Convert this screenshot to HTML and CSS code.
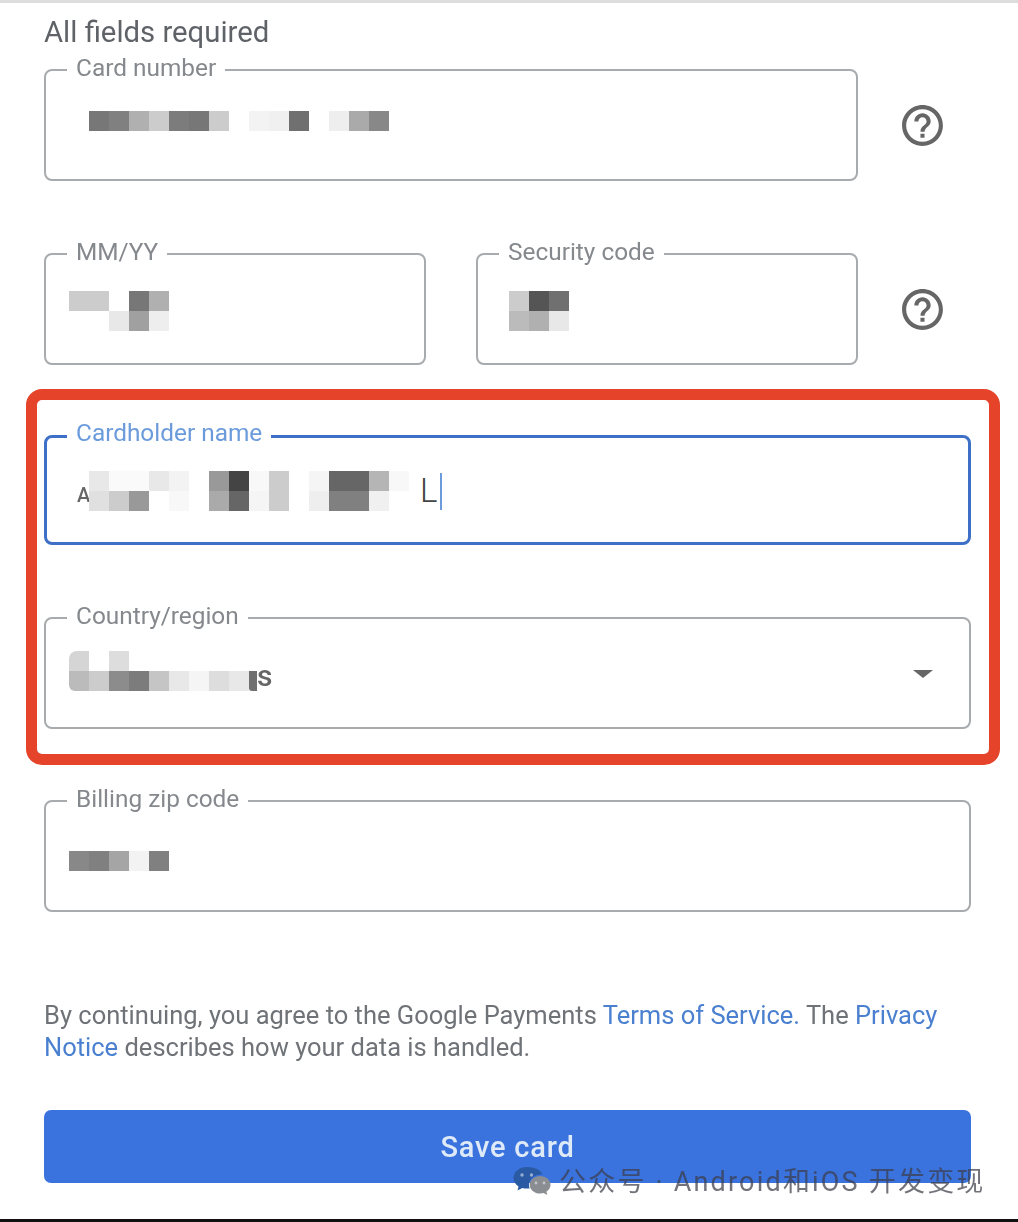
FILE: index.html
```html
<!DOCTYPE html>
<html lang="en">
<head>
    <meta charset="UTF-8">
    <title>Save card</title>
    <link rel="stylesheet" href="styles.css">
</head>
<body>
<div class="page">
    <h1 class="title">All fields required</h1>

    <div class="row">
        <div class="field">
            <span class="label">Card number</span>
            <div class="value pad-card">
                <div class="px"><i class="k77"></i><i class="k80"></i><i class="kb0"></i><i class="kcc"></i><i class="k7c"></i><i class="k77"></i><i class="kcc"></i><i></i><i class="kf3"></i><i class="kf0"></i><i class="k70"></i><i></i><i class="kee"></i><i class="kaa"></i><i class="k88"></i></div>
            </div>
        </div>
        <svg class="help" viewBox="0 0 24 24"><path d="M11 18h2v-2h-2v2zm1-16C6.48 2 2 6.48 2 12s4.48 10 10 10 10-4.48 10-10S17.52 2 12 2zm0 18c-4.41 0-8-3.59-8-8s3.59-8 8-8 8 3.59 8 8-3.59 8-8 8zm0-14c-2.21 0-4 1.79-4 4h2c0-1.1.9-2 2-2s2 .9 2 2c0 2-3 1.75-3 5h2c0-2.25 3-2.5 3-5 0-2.21-1.79-4-4-4z"/></svg>
    </div>

    <div class="row row-gap">
        <div class="pair">
            <div class="field">
                <span class="label">MM/YY</span>
                <div class="value pad-date">
                    <div>
                        <div class="px"><i class="kcc"></i><i class="kcc"></i><i></i><i class="k77"></i><i class="kb0"></i></div>
                        <div class="px"><i></i><i></i><i class="ke8"></i><i class="ka0"></i><i class="kee"></i></div>
                    </div>
                </div>
            </div>
            <div class="field">
                <span class="label">Security code</span>
                <div class="value pad-date pad-code">
                    <div>
                        <div class="px"><i class="kcc"></i><i class="k55"></i><i class="k70"></i></div>
                        <div class="px"><i class="kbb"></i><i class="kb0"></i><i class="ke8"></i></div>
                    </div>
                </div>
            </div>
        </div>
        <svg class="help" viewBox="0 0 24 24"><path d="M11 18h2v-2h-2v2zm1-16C6.48 2 2 6.48 2 12s4.48 10 10 10 10-4.48 10-10S17.52 2 12 2zm0 18c-4.41 0-8-3.59-8-8s3.59-8 8-8 8 3.59 8 8-3.59 8-8 8zm0-14c-2.21 0-4 1.79-4 4h2c0-1.1.9-2 2-2s2 .9 2 2c0 2-3 1.75-3 5h2c0-2.25 3-2.5 3-5 0-2.21-1.79-4-4-4z"/></svg>
    </div>

    <div class="mark">
        <div class="field focus">
            <span class="label">Cardholder name</span>
            <div class="value pad-name">
                <span class="first">A</span>
                <div class="name-px">
                    <div class="px"><i class="ke8"></i><i class="kfa"></i><i class="kfa"></i><i class="ke8"></i><i class="kf3"></i><i></i><i class="k99"></i><i class="k44"></i><i class="kf8"></i><i class="kcc"></i><i></i><i class="kf5"></i><i class="k66"></i><i class="k66"></i><i class="kb5"></i><i class="kf8"></i></div>
                    <div class="px"><i class="ke0"></i><i class="kcc"></i><i class="k99"></i><i></i><i class="kf8"></i><i></i><i class="kaa"></i><i class="k66"></i><i class="kf5"></i><i class="kcc"></i><i></i><i class="kee"></i><i class="k80"></i><i class="k80"></i><i class="kf0"></i></div>
                </div>
                <span class="typed">L</span>
                <span class="cursor"></span>
            </div>
        </div>
        <div class="field select">
            <span class="label">Country/region</span>
            <div class="value pad-country">
                <div>
                    <div class="px"><i class="kd5 round-top"></i><i></i><i class="kdd"></i></div>
                    <div class="px"><i class="kbb round-bottom"></i><i class="kcc"></i><i class="k8c"></i><i class="k7c"></i><i class="kc5"></i><i class="ke8"></i><i class="kf5"></i><i class="kdd"></i><i class="ke8"></i><i class="k70 cut"></i><span class="tail">s</span></div>
                </div>
            </div>
            <span class="arrow"></span>
        </div>
    </div>

    <div class="field">
        <span class="label">Billing zip code</span>
        <div class="value pad-zip">
            <div class="px"><i class="k88"></i><i class="k80"></i><i class="ka5"></i><i class="kf3"></i><i class="k80"></i></div>
        </div>
    </div>

    <p class="terms">By continuing, you agree to the Google Payments <a href="javascript:;">Terms of Service.</a> The <a href="javascript:;">Privacy Notice</a> describes how your data is handled.</p>

    <button class="save">Save card</button>
</div>

<div class="watermark">
    <svg class="wx" viewBox="0 0 38 30">
        <path class="wx-back" d="M14 1C6.5 1 .5 5.8.5 12c0 3.500 2 6.400 5 8.400L4.500 24.500l4.800-2.500c1.500.4 3 .6 4.700.6 1 0 1.800-.1 2.600-.2-.4-1.200-.6-2.300-.6-3.500 0-5.800 5.500-10.300 12.300-10.300h1C28.300 3.900 21.800 1 14 1z"/>
        <path class="wx-front" d="M37.500 18.800c0-5-4.700-8.800-10.400-8.800s-10.400 3.800-10.400 8.800 4.700 8.800 10.400 8.800c1.300 0 2.400-.2 3.600-.5l3.600 2-.9-3.300c2.600-1.700 4.100-4.100 4.100-7z"/>
        <circle class="wx-eye" cx="9" cy="9" r="1.700"/><circle class="wx-eye" cx="18.500" cy="9" r="1.700"/>
        <circle class="wx-eye" cx="23" cy="17" r="1.400"/><circle class="wx-eye" cx="31" cy="17" r="1.400"/>
    </svg>
    <span class="wx-text">公众号 · Android和iOS 开发变现</span>
</div>
</body>
</html>
```
FILE: styles.css
```css
*{
    box-sizing: border-box;
}
html,body{
    height: 100%;
}
body{
    margin: 0;
    background-color: #fff;
    font-family: Roboto, "Liberation Sans", "Noto Sans CJK SC", sans-serif;
    overflow: hidden;
    position: relative;
}
.page{
    height: 1222px;
    padding: 0 47px 0 44px;
    border-top: 3px solid #ddd;
    border-bottom: 3px solid #111;
}
.title{
    margin: 0;
    height: 66px;
    padding-top: 12px;
    font-size: 29.300px;
    line-height: 34px;
    font-weight: 400;
    color: #5f6368;
    filter: blur(.5px);
}
.row{
    display: flex;
    align-items: center;
    gap: 40px;
}
.row .field{
    width: 814px;
}
.row-gap{
    margin-top: 72px;
}
.pair{
    display: flex;
    gap: 50px;
    width: 814px;
}
.pair .field{
    flex: 1;
}
.help{
    width: 49px;
    height: 49px;
    fill: #666;
    flex: none;
    filter: blur(.6px);
}
.field{
    position: relative;
    height: 112px;
    border: 2px solid #a8abad;
    border-radius: 8px;
}
.label{
    position: absolute;
    top: -18px;
    left: 21px;
    padding: 0 9px;
    background-color: #fff;
    font-size: 24.400px;
    line-height: 30px;
    color: #85888c;
    white-space: nowrap;
    filter: blur(.4px);
}
.focus{
    height: 110px;
    border: 3px solid #3d70c6;
    border-radius: 8px;
}
.focus .label{
    top: -20px;
    left: 20px;
    color: #6b9bdb;
}
.select{
    margin-top: 72px;
}
.value{
    display: flex;
    align-items: flex-start;
    padding-left: 23px;
}
.pad-card{
    padding-top: 40px;
    padding-left: 43px;
}
.pad-date{
    padding-top: 36px;
}
.pad-code{
    padding-left: 31px;
}
.pad-name{
    padding-top: 33px;
    padding-left: 30px;
    align-items: center;
}
.pad-country{
    padding-top: 32px;
}
.pad-zip{
    padding-top: 49px;
}

/* pixelated values */
.px{
    display: flex;
    height: 20px;
}
.px i{
    display: block;
    width: 20px;
    height: 20px;
}
.k44{background-color: #444;}
.k55{background-color: #555;}
.k66{background-color: #666;}
.k70{background-color: #707070;}
.k77{background-color: #777;}
.k7c{background-color: #7c7c7c;}
.k80{background-color: #808080;}
.k88{background-color: #888;}
.k8c{background-color: #8c8c8c;}
.k99{background-color: #999;}
.ka0{background-color: #a0a0a0;}
.ka5{background-color: #a5a5a5;}
.kaa{background-color: #aaa;}
.kb0{background-color: #b0b0b0;}
.kb5{background-color: #b5b5b5;}
.kbb{background-color: #bbb;}
.kc5{background-color: #c5c5c5;}
.kcc{background-color: #ccc;}
.kd5{background-color: #d5d5d5;}
.kdd{background-color: #ddd;}
.ke0{background-color: #e0e0e0;}
.ke8{background-color: #e8e8e8;}
.kee{background-color: #eee;}
.kf0{background-color: #f0f0f0;}
.kf3{background-color: #f3f3f3;}
.kf5{background-color: #f5f5f5;}
.kf8{background-color: #f8f8f8;}
.kfa{background-color: #fafafa;}
.round-top{
    border-top-left-radius: 8px;
}
.round-bottom{
    border-bottom-left-radius: 6px;
}
.px .cut{
    width: 8px;
    border-bottom-left-radius: 3px;
}
.tail{
    font-size: 30px;
    font-weight: 500;
    line-height: 10px;
    color: #666;
    filter: blur(.4px);
}
.first{
    width: 12px;
    margin-bottom: 6px;
    align-self: flex-end;
    font-size: 20px;
    font-weight: 500;
    line-height: 20px;
    color: #666;
    filter: blur(.4px);
}
.name-px{
    position: relative;
}
.typed{
    margin-left: 11px;
    font-size: 33px;
    font-weight: 300;
    line-height: 40px;
    color: #444;
}
.cursor{
    width: 2px;
    height: 37px;
    margin-left: 3px;
    background-color: #6b9bdb;
}
.arrow{
    position: absolute;
    top: 51px;
    right: 36px;
    width: 0;
    height: 0;
    border-top: 8px solid #666;
    border-left: 10px solid transparent;
    border-right: 10px solid transparent;
}

/* red annotation round the two fields */
.mark{
    margin: 24px -29px 35px -18px;
    padding: 35px 18px 25px 7px;
    border: 11px solid #e5432a;
    border-radius: 16px;
}
.terms{
    margin: 87px 0 0;
    font-size: 25.500px;
    line-height: 32px;
    color: #6f7378;
    filter: blur(.4px);
}
.terms a{
    color: #4a80cf;
    text-decoration: none;
}
.save{
    display: block;
    width: 927px;
    height: 73px;
    margin: 47px 0 0;
    border: 0;
    border-radius: 7px;
    background-color: #3a73de;
    color: #dfeaf8;
    font-family: inherit;
    font-size: 29px;
    font-weight: 500;
    letter-spacing: .8px;
    filter: blur(.3px);
}
.watermark{
    position: absolute;
    left: 513px;
    top: 1165px;
    display: flex;
    align-items: center;
    gap: 8px;
    font-size: 27px;
    line-height: 30px;
    letter-spacing: 2.200px;
    color: rgba(60,60,70,.72);
    white-space: nowrap;
    filter: blur(.4px);
}
.wx-text{
    padding-top: 2px;
}
.wx{
    width: 38px;
    height: 30px;
    flex: none;
}
.wx-back{
    fill: #2b5aa5;
}
.wx-front{
    fill: #8a8d92;
}
.wx-eye{
    fill: rgba(255,255,255,.5);
}
```
